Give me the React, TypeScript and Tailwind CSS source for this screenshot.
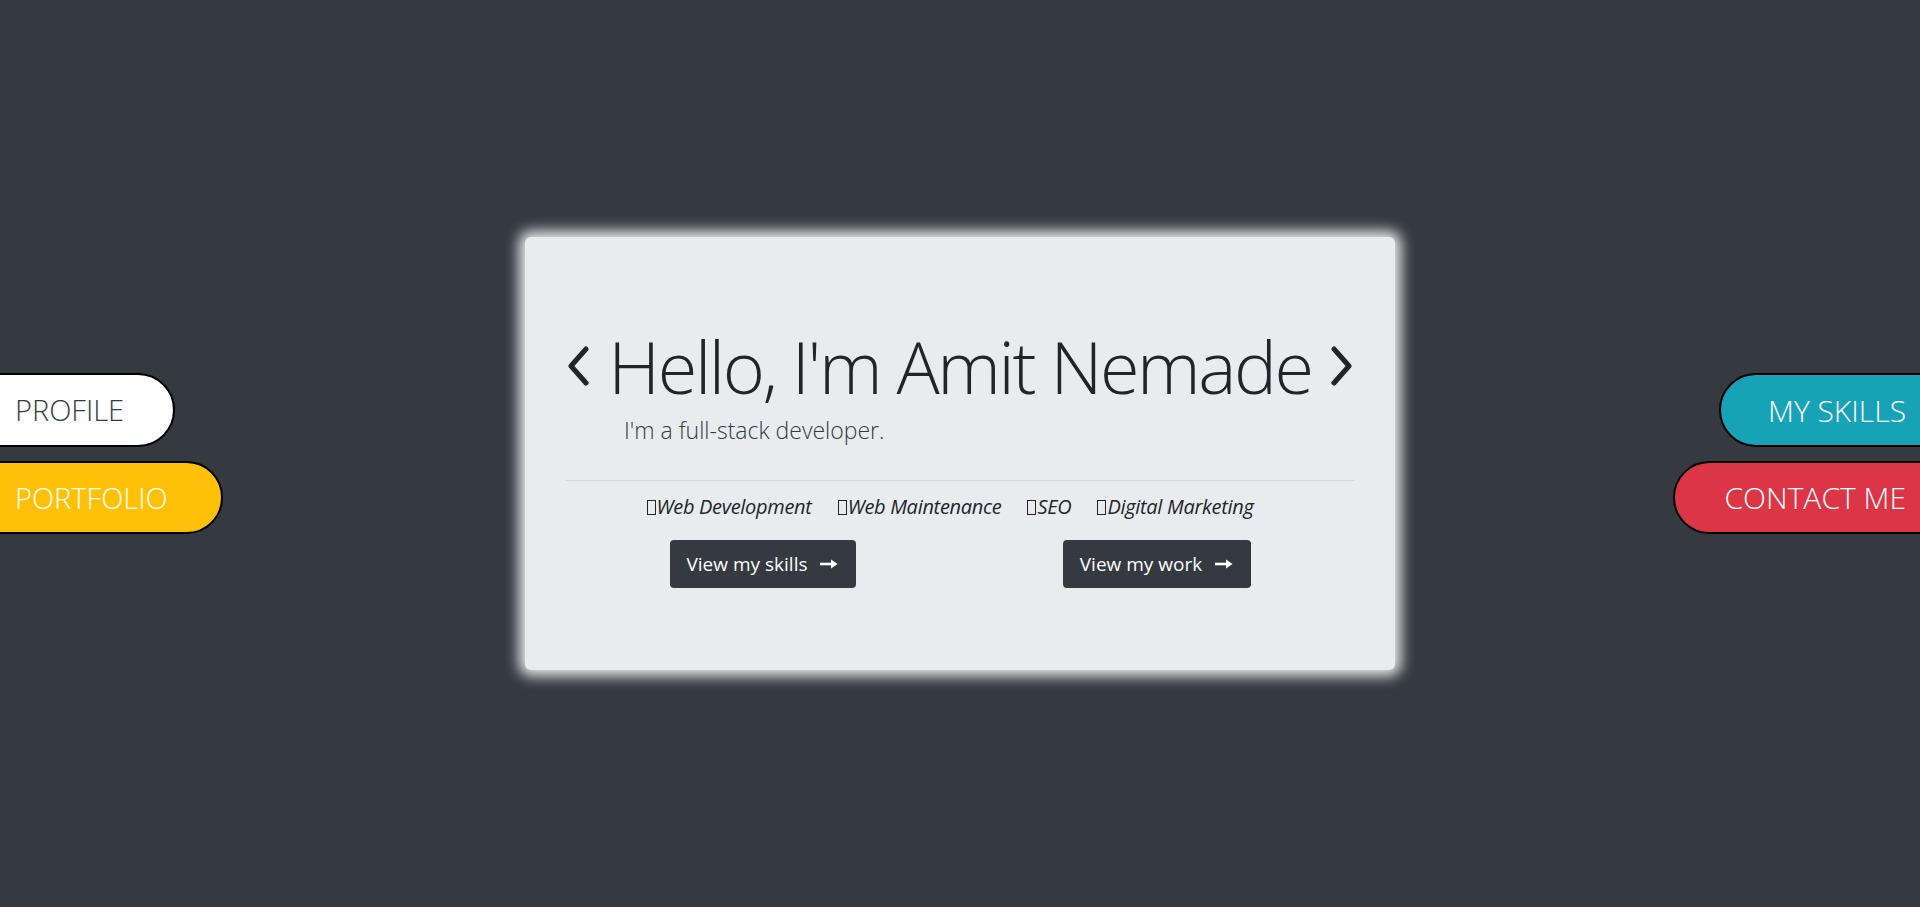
const skills = ["Web Development", "Web Maintenance", "SEO", "Digital Marketing"];

function Chevron({ dir }: { dir: "left" | "right" }) {
  const pts = dir === "left" ? "20,3 5,20 20,37" : "4,3 19,20 4,37";
  return (
    <svg width="24" height="40" viewBox="0 0 24 40" className="shrink-0">
      <polyline points={pts} fill="none" stroke="#212529" strokeWidth="5" strokeLinecap="round" strokeLinejoin="round" />
    </svg>
  );
}

function Arrow() {
  return (
    <svg width="18" height="12" viewBox="0 0 18 12" className="ml-[13px]">
      <path d="M0 6h12" stroke="#fff" strokeWidth="2.6" />
      <path d="M11 1.5L17.5 6 11 10.5z" fill="#fff" />
    </svg>
  );
}

function Tofu() {
  return <span className="inline-block w-[9px] h-[15px] border border-[#212529] mr-[1px]" />;
}

export default function App() {
  return (
    <main
      className="h-[907px] w-full bg-[#343a40] grid grid-cols-[1fr_870px_1fr] items-center overflow-hidden"
      style={{ fontFamily: '"Open Sans", "Noto Sans", sans-serif' }}
    >
      {/* left nav */}
      <nav className="justify-self-start flex flex-col gap-[14px] -ml-[2px]">
        <a className="w-[177px] h-[74px] flex items-center pl-[15px] bg-white text-[#343a40] border-2 border-black rounded-r-full text-[29px] font-light">
          PROFILE
        </a>
        <a className="w-[225px] h-[73px] flex items-center pl-[15px] bg-[#ffc107] text-white border-2 border-black rounded-r-full text-[29px] font-light">
          PORTFOLIO
        </a>
      </nav>

      {/* card */}
      <section className="h-[433px] bg-[#e9ecef] rounded-[6px] shadow-[0_0_14px_6px_rgba(255,255,255,0.9)] px-[41px] pt-[86px]">
        <h1 className="flex items-center justify-between text-[#212529]">
          <Chevron dir="left" />
          <span className="text-[72px] leading-[86px] font-light tracking-[-2.4px]">Hello, I'm Amit Nemade</span>
          <Chevron dir="right" />
        </h1>
        <p className="pl-[58px] mt-[5px] text-[23px] leading-[32px] font-light text-[#343a40]">I'm a full-stack developer.</p>

        <hr className="mt-[34px] border-t border-[#d3d6da]" />

        <div className="mt-[12px] flex justify-center gap-[26px] italic text-[20px] leading-[28px] text-[#212529] pr-[20px] tracking-[-0.3px]">
          {skills.map((s) => (
            <span key={s} className="flex items-center">
              <Tofu />
              {s}
            </span>
          ))}
        </div>

        <div className="mt-[19px] grid grid-cols-2">
          <div className="flex justify-center">
            <button className="h-[48px] pl-[17px] pr-[18px] flex items-center bg-[#343a40] text-white text-[19px] rounded-[4px]">
              View my skills
              <Arrow />
            </button>
          </div>
          <div className="flex justify-center">
            <button className="h-[48px] pl-[17px] pr-[18px] flex items-center bg-[#343a40] text-white text-[19px] rounded-[4px]">
              View my work
              <Arrow />
            </button>
          </div>
        </div>
      </section>

      {/* right nav */}
      <nav className="justify-self-end flex flex-col items-end gap-[14px] -mr-[2px]">
        <a className="w-[203px] h-[74px] flex items-center justify-end pr-[14px] bg-[#17a2b8] text-white border-2 border-black rounded-l-full text-[30px] font-light">
          MY SKILLS
        </a>
        <a className="w-[249px] h-[73px] flex items-center justify-end pr-[14px] bg-[#dc3545] text-white border-2 border-black rounded-l-full text-[30px] font-light">
          CONTACT ME
        </a>
      </nav>
    </main>
  );
}
